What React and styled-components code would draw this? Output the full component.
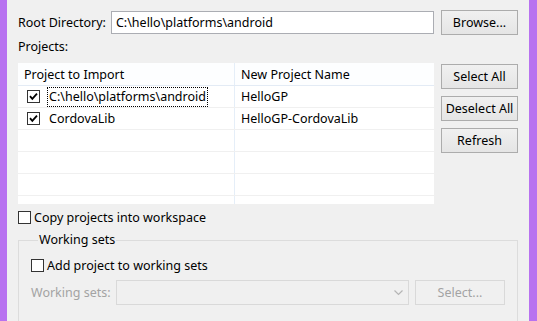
import styled, { createGlobalStyle } from 'styled-components';

const __FRAME = '#b872f0';
const __FACE = '#f0f0f0';
const __TEXT = '#000000';
const __DISABLED = '#a3a3a3';
const __LINE = '#f0f0f0';
const __COL_LINE = '#e5eef8';

const GlobalStyle = createGlobalStyle`
    html, body { margin:0; padding:0; overflow:hidden; }
    body {
        font-family: "Segoe UI", "Noto Sans", "Open Sans", sans-serif;
        font-size:12.5px;
        color:${__TEXT};
    }
`;

const Frame = styled.div`
    display:flex;
    width:537px;
    height:321px;
    overflow:hidden;
    background:${__FRAME};
`;

const Edge = styled.div`
    flex:none;
    width:${props => props.$w}px;
`;

const Content = styled.div`
    flex:1;
    background:${__FACE};
    padding:10px 11px 0 11px;
    display:flex;
    flex-direction:column;
`;

const DirRow = styled.div`
    display:flex;
    align-items:center;
    height:25px;
`;

const Label = styled.span`
    white-space:nowrap;
    line-height:16px;
    color:${props => props.$disabled ? __DISABLED : __TEXT};
    width:${props => props.$w ? props.$w + 'px' : 'auto'};
    flex:none;
`;

const TextBox = styled.div`
    flex:1;
    height:23px;
    margin:0 7px 0 5px;
    box-sizing:border-box;
    border:1px solid #abadb3;
    background:#ffffff;
    padding-left:4px;
    display:flex;
    align-items:center;
    white-space:nowrap;
`;

const Button = styled.button`
    box-sizing:border-box;
    width:${props => props.$w || 77}px;
    height:25px;
    padding:0;
    font:inherit;
    color:${props => props.disabled ? __DISABLED : __TEXT};
    border:1px solid ${props => props.disabled ? '#d9d9d9' : '#acacac'};
    background:${props => props.disabled ? '#f0f0f0' : 'linear-gradient(#f0f0f0, #e5e5e5)'};
    flex:none;
`;

const SectionLabel = styled.div`
    line-height:16px;
    margin:4px 0 8px 0;
`;

const ProjectArea = styled.div`
    display:grid;
    grid-template-columns:416px 77px;
    column-gap:7px;
`;

const Table = styled.div`
    height:141px;
    overflow:hidden;
    background:#ffffff;
`;

const Row = styled.div`
    display:grid;
    grid-template-columns:217px 1fr;
    height:${props => props.$head ? 23 : 22}px;
    box-sizing:border-box;
    border-bottom:1px solid ${props => props.$head ? '#e3ebf5' : __LINE};
    background:${props => props.$head ? '#fdfeff' : '#ffffff'};
`;

const Cell = styled.div`
    display:flex;
    align-items:center;
    padding-left:${props => props.$pad}px;
    border-right:${props => props.$first ? `1px solid ${__COL_LINE}` : 'none'};
    white-space:nowrap;
    overflow:hidden;
`;

const FocusText = styled.span`
    margin-left:7px;
    padding:0 1px;
    line-height:18px;
    border:1px dotted ${props => props.$focus ? '#000' : 'transparent'};
`;

const ButtonColumn = styled.div`
    display:flex;
    flex-direction:column;
    gap:7px;
    padding-top:1px;
`;

const CheckRow = styled.label`
    display:flex;
    align-items:center;
    height:13px;
    gap:3px;
    margin-top:${props => props.$top}px;
    white-space:nowrap;
`;

const Box = styled.span`
    box-sizing:border-box;
    width:13px;
    height:13px;
    border:1px solid #333333;
    background:#ffffff;
    display:flex;
    align-items:center;
    justify-content:center;
    flex:none;
`;

const Group = styled.fieldset`
    margin:8px 0 0 0;
    padding:11px 12px 20px 12px;
    border:1px solid #dcdcdc;
    min-width:0;
`;

const Legend = styled.legend`
    margin-left:7px;
    padding:0 1px;
    line-height:16px;
`;

const SetsRow = styled.div`
    display:flex;
    align-items:center;
    margin-top:8px;
    height:25px;
`;

const Combo = styled.div`
    box-sizing:border-box;
    width:293px;
    height:25px;
    border:1px solid #d9d9d9;
    background:#f0f0f0;
    margin-right:6px;
    display:flex;
    align-items:center;
    justify-content:flex-end;
    padding-right:5px;
`;

const Check = ({ checked }) => (
    <Box>
        {checked && (
            <svg width="11" height="11" viewBox="0 0 11 11">
                <path d="M2 5.2 L4.3 7.8 L9 2.6" fill="none" stroke="#000" strokeWidth="1.8" />
            </svg>
        )}
    </Box>
);

const rows = [
    { name: 'C:\\hello\\platforms\\android', target: 'HelloGP', checked: true, focus: true },
    { name: 'CordovaLib', target: 'HelloGP-CordovaLib', checked: true },
    {}, {}, {}, {}
];

const App = () => {
    return (
        <>
            <GlobalStyle />
            <Frame>
                <Edge $w={7} />
                <Content>
                    <DirRow>
                        <Label>Root Directory:</Label>
                        <TextBox>C:\hello\platforms\android</TextBox>
                        <Button type='button'>Browse...</Button>
                    </DirRow>

                    <SectionLabel>Projects:</SectionLabel>

                    <ProjectArea>
                        <Table>
                            <Row $head>
                                <Cell $first $pad={6}>Project to Import</Cell>
                                <Cell $pad={6}>New Project Name</Cell>
                            </Row>
                            {rows.map((r, i) => (
                                <Row key={i}>
                                    <Cell $first $pad={9}>
                                        {r.name && (
                                            <>
                                                <Check checked={r.checked} />
                                                <FocusText $focus={r.focus}>{r.name}</FocusText>
                                            </>
                                        )}
                                    </Cell>
                                    <Cell $pad={6}>{r.target}</Cell>
                                </Row>
                            ))}
                        </Table>
                        <ButtonColumn>
                            <Button type='button'>Select All</Button>
                            <Button type='button'>Deselect All</Button>
                            <Button type='button'>Refresh</Button>
                        </ButtonColumn>
                    </ProjectArea>

                    <CheckRow $top={7}>
                        <Check />
                        <span>Copy projects into workspace</span>
                    </CheckRow>

                    <Group>
                        <Legend>Working sets</Legend>
                        <CheckRow $top={0}>
                            <Check />
                            <span>Add project to working sets</span>
                        </CheckRow>
                        <SetsRow>
                            <Label $disabled $w={85}>Working sets:</Label>
                            <Combo>
                                <svg width="9" height="6" viewBox="0 0 9 6">
                                    <path d="M0.5 0.5 L4.5 4.5 L8.5 0.5" fill="none" stroke="#b5b5b5" strokeWidth="1.2" />
                                </svg>
                            </Combo>
                            <Button type='button' disabled $w={90}>Select...</Button>
                        </SetsRow>
                    </Group>
                </Content>
                <Edge $w={8} />
            </Frame>
        </>
    );
}

export default App;
